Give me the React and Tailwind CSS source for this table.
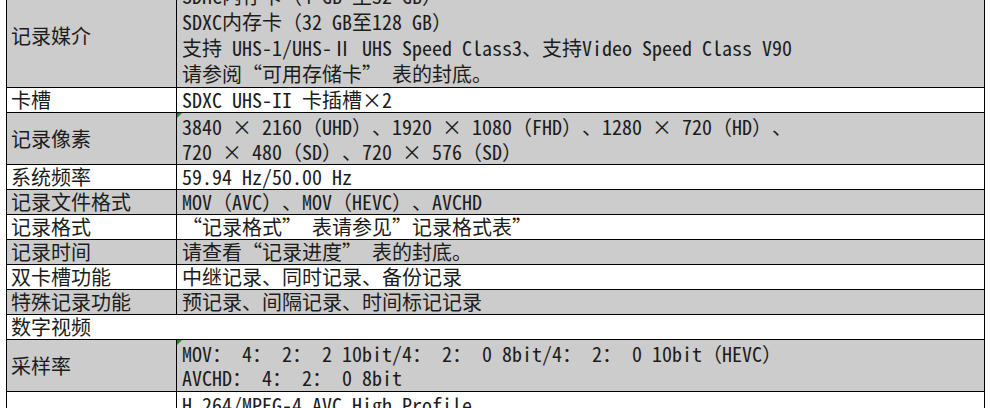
const rows = [
  {
    label: "记录媒介",
    gray: true,
    h: "h-[104px] -mt-[16px]",
    align: "justify-end",
    lead: "leading-[26px]",
    mark: true,
    lines: [
      "SDHC内存卡（4 GB 至32 GB）",
      "SDXC内存卡（32 GB至128 GB）",
      "支持 UHS-1/UHS-Ⅱ UHS Speed Class3、支持Video Speed Class V90",
      "请参阅“可用存储卡” 表的封底。",
    ],
  },
  { label: "卡槽", lines: ["SDXC UHS-II 卡插槽×2"] },
  {
    label: "记录像素",
    gray: true,
    h: "h-[52px]",
    lead: "leading-[25px]",
    mark: true,
    lines: [
      "3840 × 2160（UHD）、1920 × 1080（FHD）、1280 × 720（HD）、",
      "720 × 480（SD）、720 × 576（SD）",
    ],
  },
  { label: "系统频率", lines: ["59.94 Hz/50.00 Hz"] },
  { label: "记录文件格式", gray: true, lines: ["MOV（AVC）、MOV（HEVC）、AVCHD"] },
  { label: "记录格式", lines: ["“记录格式” 表请参见”记录格式表”"] },
  { label: "记录时间", gray: true, lines: ["请查看“记录进度” 表的封底。"] },
  { label: "双卡槽功能", lines: ["中继记录、同时记录、备份记录"] },
  { label: "特殊记录功能", gray: true, lines: ["预记录、间隔记录、时间标记记录"] },
  { label: "数字视频", merged: true },
  {
    label: "采样率",
    gray: true,
    h: "h-[52px]",
    lead: "leading-[24px]",
    mark: true,
    lines: [
      "MOV： 4： 2： 2 10bit/4： 2： 0 8bit/4： 2： 0 10bit（HEVC）",
      "AVCHD： 4： 2： 0 8bit",
    ],
  },
  {
    label: "",
    h: "h-[52px]",
    align: "justify-start",
    lead: "leading-[25px]",
    lines: ["H.264/MPEG-4 AVC High Profile"],
  },
];

function Mark() {
  // green error indicator in the cell corner
  return (
    <span className="absolute left-0 top-0 w-0 h-0 border-t-[5px] border-t-[#1e8c1e] border-r-[5px] border-r-transparent" />
  );
}

export default function App() {
  return (
    <div className="h-[408px] w-[990px] overflow-hidden bg-white text-[#1c1c1c] text-[20px] [text-spacing-trim:space-all] font-['Noto_Sans_Mono_CJK_SC','Noto_Sans_CJK_SC','Liberation_Mono',monospace]">
      <div className="ml-[6px] w-[979px] border-l border-r border-black flex flex-col">
        {rows.map((r, i) => (
          <div
            key={i}
            className={`flex shrink-0 border-b border-black ${r.h || "h-[25px]"} ${r.gray ? "bg-[#cccccc]" : "bg-white"}`}
          >
            {r.merged ? (
              <div className="flex items-center pl-[4px] leading-[24px] whitespace-nowrap">{r.label}</div>
            ) : (
              <>
                <div className="w-[170px] shrink-0 border-r border-black flex items-center pl-[4px] leading-[24px] whitespace-nowrap">
                  {r.label}
                </div>
                <div className={`relative flex-1 flex flex-col pl-[5px] whitespace-nowrap ${r.align || "justify-center"} ${r.lead || "leading-[24px]"}`}>
                  {r.mark && <Mark />}
                  {r.lines.map((l, j) => (
                    <div key={j}>{l}</div>
                  ))}
                </div>
              </>
            )}
          </div>
        ))}
      </div>
    </div>
  );
}
